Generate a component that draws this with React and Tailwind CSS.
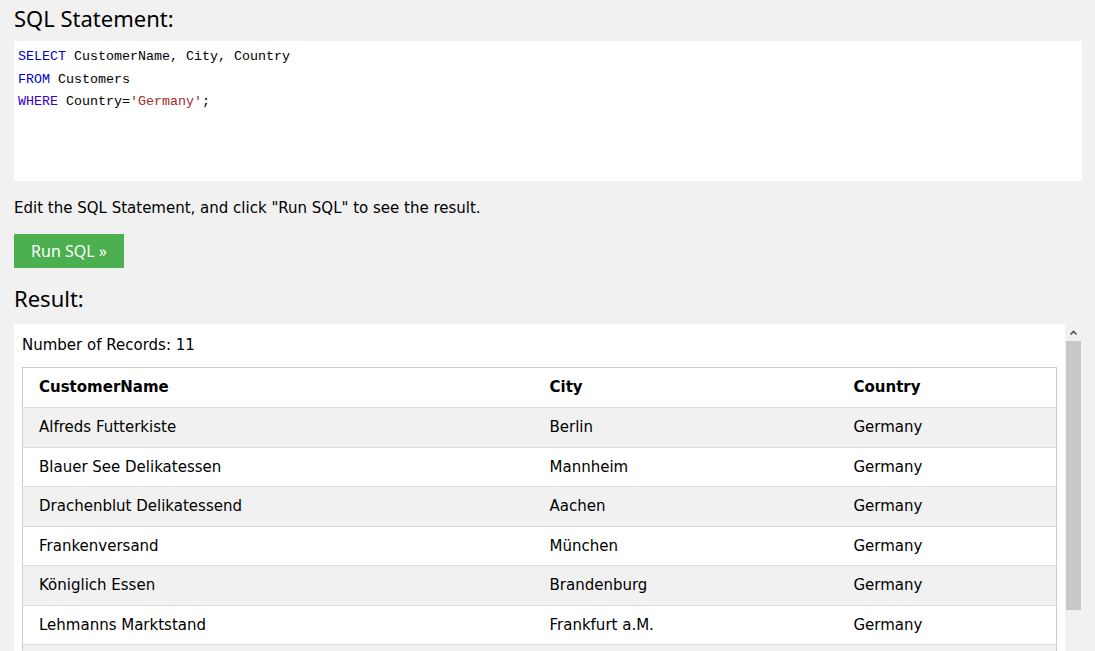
import React from 'react';

const ROWS = [
  ['Alfreds Futterkiste', 'Berlin', 'Germany'],
  ['Blauer See Delikatessen', 'Mannheim', 'Germany'],
  ['Drachenblut Delikatessend', 'Aachen', 'Germany'],
  ['Frankenversand', 'München', 'Germany'],
  ['Königlich Essen', 'Brandenburg', 'Germany'],
  ['Lehmanns Marktstand', 'Frankfurt a.M.', 'Germany'],
  ['Morgenstern Gesundkost', 'Leipzig', 'Germany'],
  ['Ottilies Käseladen', 'Köln', 'Germany'],
  ['QUICK-Stop', 'Cunewalde', 'Germany'],
  ['Toms Spezialitäten', 'Köln', 'Germany'],
  ['Die Wandernde Kuh', 'Stuttgart', 'Germany'],
];

const body = { fontFamily: '"DejaVu Sans", Verdana, sans-serif' };
const head = { fontFamily: '"Noto Sans", "Open Sans", sans-serif' };
const mono = { fontFamily: '"Liberation Mono", Consolas, monospace' };

export default function App() {
  return (
    <div className="h-[651px] w-[1095px] overflow-hidden bg-[#f1f1f1] text-black" style={body}>
      <div className="pl-[14px] pr-[13px]">
        {/* SQL Statement */}
        <h2 className="pt-[1px] text-[22px] leading-[34px]" style={head}>SQL Statement:</h2>
        <div className="mt-[6px] h-[140px] bg-white px-[4px] pt-[5px] text-[13.33px] leading-[22.5px]" style={mono}>
          <div><span className="text-[#0000cd]">SELECT</span> CustomerName, City, Country</div>
          <div><span className="text-[#0000cd]">FROM</span> Customers</div>
          <div><span className="text-[#3300cc]">WHERE</span> Country=<span className="text-[#a52a2a]">'Germany'</span>;</div>
        </div>

        <p className="mt-[17px] text-[15px] leading-[20px]">
          Edit the SQL Statement, and click "Run SQL" to see the result.
        </p>

        <button className="mt-[16px] flex h-[34px] w-[110px] items-center justify-center bg-[#4CAF50] text-[16px] text-white" style={head}>
          Run SQL »
        </button>

        {/* Result */}
        <h2 className="mt-[14px] text-[22px] leading-[32px]" style={head}>Result:</h2>

        <div className="mt-[10px] flex bg-white">
          <div className="flex-1 px-[8px] pt-[11px]">
            <div className="text-[15px] leading-[20px]">Number of Records: 11</div>
            <table className="mt-[12px] w-[1035px] border-collapse border border-[#cccccc] text-[15px]">
              <thead>
                <tr className="h-[40px] bg-white">
                  <th className="w-[511px] pl-[16px] text-left font-bold">CustomerName</th>
                  <th className="w-[304px] pl-[16px] text-left font-bold">City</th>
                  <th className="pl-[16px] text-left font-bold">Country</th>
                </tr>
              </thead>
              <tbody>
                {ROWS.map((r, i) => (
                  <tr key={i} className={`h-[39.5px] border-t border-[#dddddd] ${i % 2 === 0 ? 'bg-[#f1f1f1]' : 'bg-white'}`}>
                    <td className="pl-[16px]">{r[0]}</td>
                    <td className="pl-[16px]">{r[1]}</td>
                    <td className="pl-[16px]">{r[2]}</td>
                  </tr>
                ))}
              </tbody>
            </table>
          </div>
          {/* scrollbar */}
          <div className="flex w-[17px] flex-col items-center bg-[#f1f1f1]">
            <svg width="9" height="17" viewBox="0 0 9 17">
              <path d="M1.5 10.5 L4.5 7.5 L7.5 10.5" fill="none" stroke="#505050" strokeWidth="1.6" />
            </svg>
            <div className="h-[269px] w-[15px] bg-[#c8c8c8]" />
          </div>
        </div>
      </div>
    </div>
  );
}
